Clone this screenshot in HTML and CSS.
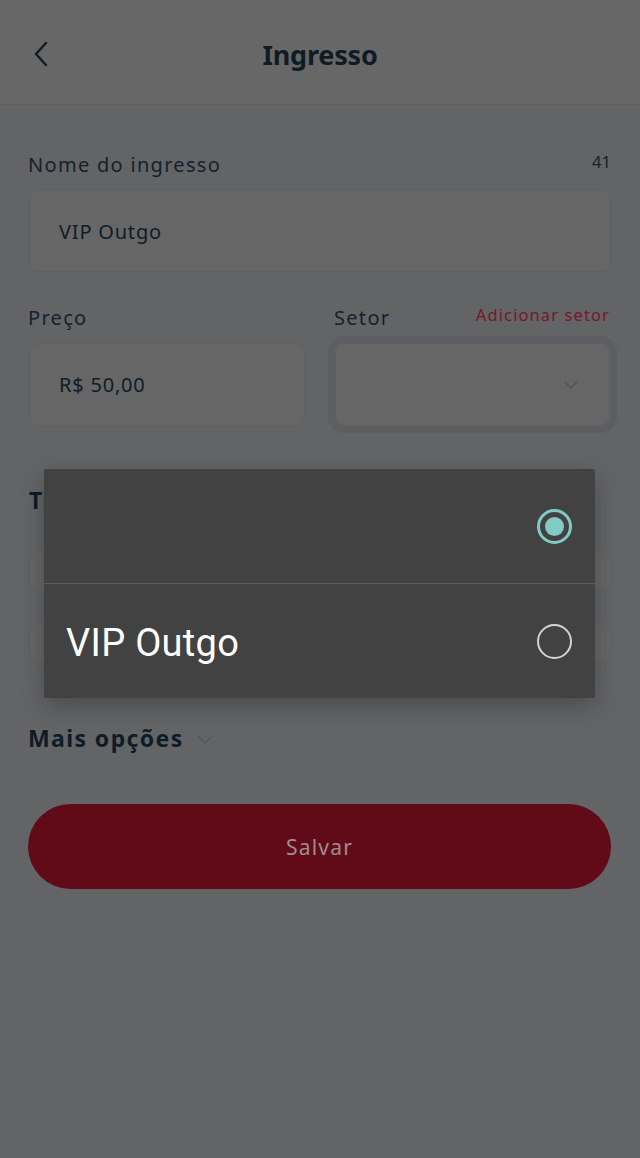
FILE: index.html
```html
<!DOCTYPE html>
<html lang="pt-BR">
<head>
<meta charset="utf-8">
<title>Ingresso</title>
<link rel="stylesheet" href="styles.css">
</head>
<body>
<div class="app">
  <header class="topbar">
    <button class="back" aria-label="Voltar">
      <svg width="16" height="26" viewBox="0 0 16 26"><path d="M13 2 L3 13 L13 24" fill="none" stroke="#0f1c26" stroke-width="2.4" stroke-linecap="round" stroke-linejoin="round"/></svg>
    </button>
    <h1 class="title">Ingresso</h1>
  </header>

  <main class="form">
    <div class="field">
      <div class="label-row">
        <span class="label">Nome do ingresso</span>
        <span class="counter">41</span>
      </div>
      <div class="input">VIP Outgo</div>
    </div>

    <div class="field-row">
      <div class="field">
        <div class="label-row">
          <span class="label">Preço</span>
        </div>
        <div class="input">R$ 50,00</div>
      </div>
      <div class="field">
        <div class="label-row">
          <span class="label">Setor</span>
          <span class="link">Adicionar setor</span>
        </div>
        <div class="input select focused">
          <span></span>
          <svg width="14" height="8" viewBox="0 0 14 8"><path d="M1 1 L7 7 L13 1" fill="none" stroke="#4f5356" stroke-width="1.4"/></svg>
        </div>
      </div>
    </div>

    <h2 class="section">Tipo de venda</h2>
    <div class="input small"></div>
    <div class="input small second"></div>

    <div class="more">
      <span>Mais opções</span>
      <svg width="16" height="9" viewBox="0 0 16 9"><path d="M1 1 L8 8 L15 1" fill="none" stroke="#55595c" stroke-width="1.6"/></svg>
    </div>

    <button class="save">Salvar</button>
  </main>

  <div class="dialog">
    <div class="option">
      <span class="opt-text"></span>
      <span class="radio checked"></span>
    </div>
    <div class="option">
      <span class="opt-text">VIP Outgo</span>
      <span class="radio"></span>
    </div>
  </div>
</div>
</body>
</html>
```

FILE: styles.css
```css
* { box-sizing: border-box; }
html, body { margin: 0; padding: 0; }
body { background: #636466; font-family: "Noto Sans", "Open Sans", sans-serif; }

.app {
  position: relative;
  width: 640px;
  height: 1158px;
  background: #636466;
  overflow: hidden;
}

.topbar {
  height: 105px;
  background: #676767;
  border-bottom: 1px solid #5d5e5f;
  display: flex;
  align-items: center;
  justify-content: center;
  position: relative;
  padding-top: 4px;
}
.back {
  position: absolute;
  left: 31px;
  top: 40px;
  background: none;
  border: 0;
  padding: 0;
  width: 20px;
  height: 28px;
  display: flex;
  align-items: center;
  justify-content: center;
}
.title {
  margin: 0;
  font-size: 27px;
  font-weight: 700;
  color: #0f1c26;
  letter-spacing: -0.2px;
}

.form {
  padding: 45px 29px 0 29px;
  display: flex;
  flex-direction: column;
}

.label-row {
  display: flex;
  justify-content: space-between;
  align-items: center;
  height: 28px;
  margin-bottom: 12px;
}
.label {
  font-size: 20px;
  color: #15212b;
  margin-left: -1px;
  letter-spacing: 1.3px;
}
.counter {
  font-size: 16.5px;
  color: #15212b;
  margin-top: -6px;
}
.link {
  font-size: 16.5px;
  color: #76192a;
  margin-top: -5px;
  letter-spacing: 1.1px;
}

.input {
  height: 82px;
  background: #666666;
  border: 1px solid #5f6061;
  border-radius: 9px;
  display: flex;
  align-items: center;
  padding-left: 29px;
  font-size: 20px;
  color: #101c26;
  letter-spacing: 0.8px;
}

.field-row {
  display: grid;
  grid-template-columns: 276px 275px;
  column-gap: 30px;
  margin-top: 31px;
}
.field-row .input { height: 83px; }
.select {
  justify-content: space-between;
  padding-right: 31px;
}
.focused {
  box-shadow: 0 0 0 7px #5c5e62;
}

.section {
  margin: 58px 0 0 0;
  height: 32px;
  line-height: 32px;
  font-size: 23px;
  font-weight: 700;
  color: #0f1c26;
}
.input.small {
  height: 42px;
  margin-top: 34px;
}
.input.small.second {
  height: 40px;
  margin-top: 30px;
}

.more {
  margin-top: 60px;
  height: 32px;
  display: flex;
  align-items: center;
  gap: 13px;
  font-size: 23px;
  font-weight: 700;
  color: #0f1c26;
  margin-left: -1px;
  letter-spacing: 1.4px;
}
.more svg { margin-top: 2px; }

.save {
  margin-top: 50px;
  height: 85px;
  width: 583px;
  margin-left: -1px;
  border: 0;
  border-radius: 43px;
  background: #600b17;
  color: #a08c8f;
  font-family: "Noto Sans", "Open Sans", sans-serif;
  font-size: 21px;
  letter-spacing: 1.2px;
}

.dialog {
  position: absolute;
  left: 44px;
  top: 469px;
  width: 551px;
  background: #424242;
  border-radius: 2px;
  box-shadow: 0 8px 24px rgba(0,0,0,0.25);
  display: flex;
  flex-direction: column;
}
.option {
  height: 114px;
  display: flex;
  align-items: center;
  justify-content: space-between;
  padding: 0 23px 0 22px;
}
.option + .option {
  border-top: 1.5px solid #5a5a5a;
  height: 115px;
}
.opt-text {
  font-family: Roboto, "Noto Sans", sans-serif;
  font-size: 38px;
  color: #ffffff;
  padding-top: 3px;
  letter-spacing: 0.3px;
}
.radio {
  width: 35px;
  height: 35px;
  border-radius: 50%;
  border: 2.8px solid #d4d4d4;
  display: flex;
  align-items: center;
  justify-content: center;
}
.radio.checked {
  border: 3px solid #80cbc4;
}
.radio.checked::after {
  content: "";
  width: 19px;
  height: 19px;
  border-radius: 50%;
  background: #80cbc4;
}
```
